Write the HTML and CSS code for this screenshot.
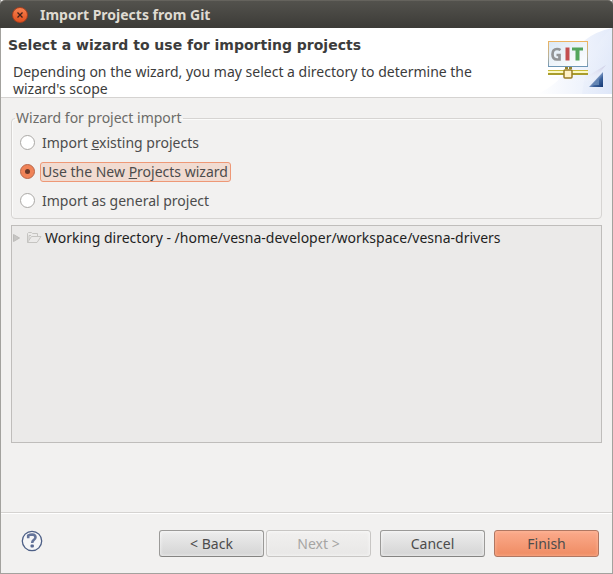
FILE: index.html
```html
<!DOCTYPE html>
<html lang="en">
<head>
<meta charset="utf-8">
<title>Import Projects from Git</title>
<link rel="stylesheet" href="styles.css">
</head>
<body>
<div class="window">
  <header class="titlebar">
    <button class="close" type="button" aria-label="Close">
      <svg width="8" height="8" viewBox="0 0 8 8"><path d="M1.5 1.5l5 5M6.5 1.5l-5 5" stroke="#40211a" stroke-width="1.3"/></svg>
    </button>
    <span class="caption">Import Projects from Git</span>
  </header>
  <section class="banner">
    <div class="intro">
      <h1>Select a wizard to use for importing projects</h1>
      <p>Depending on the wizard, you may select a directory to determine the wizard's scope</p>
    </div>
    <svg class="art" width="75" height="66" viewBox="0 0 75 66" aria-hidden="true">
      <defs>
        <linearGradient id="sky" x1="0" y1="0" x2="1" y2="1"><stop offset="0" stop-color="#f4f7fd"/><stop offset="1" stop-color="#dce5f8"/></linearGradient>
        <linearGradient id="fade" x1="0" y1="0" x2="1" y2="0"><stop offset="0" stop-color="#fff"/><stop offset="1" stop-color="#e4ebfa"/></linearGradient>
        <linearGradient id="frame" x1="0" y1="0" x2="0" y2="1"><stop offset="0" stop-color="#efb45e"/><stop offset=".6" stop-color="#b8b19a"/><stop offset="1" stop-color="#7199b8"/></linearGradient>
        <linearGradient id="screen" x1="0" y1="0" x2="1" y2="1"><stop offset="0" stop-color="#dce9f5"/><stop offset="1" stop-color="#fff"/></linearGradient>
        <linearGradient id="corner" x1="0" y1="0" x2="1" y2="1"><stop offset=".35" stop-color="#b9cbe5"/><stop offset=".65" stop-color="#3d639d"/><stop offset="1" stop-color="#143873"/></linearGradient>
        <linearGradient id="shade" x1="0" y1="0" x2="0" y2="1"><stop offset="0" stop-color="#c4c2df"/><stop offset="1" stop-color="#fff" stop-opacity="0"/></linearGradient>
      </defs>
      <path d="M0 66Q25 55 32 35Q42 7 75 0V66Z" fill="url(#fade)"/>
      <path d="M45 66Q50 22 75 0V66Z" fill="url(#sky)" opacity=".7"/>
      <path d="M10 49H49L69 37L56 53Q25 57 10 49Z" fill="url(#shade)" opacity=".8"/>
      <path d="M11 13H51V39H11Z" fill="url(#frame)"/>
      <path d="M12 14H50V38H12Z" fill="url(#screen)"/>
      <path d="M11 38H51V39H11Z" fill="#6d96b6"/>
      <g fill="none">
        <path d="M23.500 22Q22 21 20 21Q15.500 21 15.500 26.300Q15.500 31.500 20 31.500H22.500V27H19.500" stroke="#929496" stroke-width="2.700"/>
        <path d="M30.500 19.500V32.500" stroke="#c34e50" stroke-width="4"/>
        <path d="M35 21H46" stroke="#52a55c" stroke-width="3"/>
        <path d="M40.500 21V32.500" stroke="#52a55c" stroke-width="4"/>
      </g>
      <path d="M11 42H51V47H11Z" fill="#fbf8c4"/>
      <path d="M11 42.500H51" stroke="#c9bb36"/>
      <path d="M11 46H51" stroke="#a99c2b" stroke-width="2"/>
      <path d="M28 40H35" stroke="#938230" stroke-width="2" stroke-dasharray="3 1"/>
      <rect x="27" y="42" width="8" height="8" rx="1" fill="#fff2c7" stroke="#997c23" stroke-width="1.500"/>
      <path d="M52 59L66 44V59Z" fill="url(#corner)"/>
      <path d="M56 57L62 51V57Z" fill="#7394be" opacity=".7"/>
    </svg>
  </section>
  <main class="content">
    <fieldset class="group">
      <legend>Wizard for project import</legend>
      <label class="option"><input type="radio" name="wizard"><span>Import <u>e</u>xisting projects</span></label>
      <label class="option"><input type="radio" name="wizard" checked><span>Use the New <u>P</u>rojects wizard</span></label>
      <label class="option"><input type="radio" name="wizard"><span>Import as general project</span></label>
    </fieldset>
    <div class="tree" role="tree">
      <div class="node" role="treeitem" aria-expanded="false">
        <svg width="7" height="8" viewBox="0 0 7 8"><path d="M.5.5L6.500 4L.5 7.500Z" fill="#c6c5c3" stroke="#bcbbb9"/></svg>
        <svg class="folder" width="16" height="12" viewBox="0 0 16 12"><path d="M1.500 10.500V1.500L2.500.5H5.500L6.500 1.500H11.500V4.500M1.500 10.500L5.500 4.500H15L11 10.500ZM3 8V3.500H5" fill="none" stroke="#c5c4c1"/></svg>
        <span>Working directory - /home/vesna-developer/workspace/vesna-drivers</span>
      </div>
    </div>
  </main>
  <footer class="actions">
    <button class="help" type="button" aria-label="Help">
      <svg width="22" height="22" viewBox="0 0 22 22"><circle cx="11" cy="11" r="9.700" fill="#f6f6f7" stroke="#4d5f86" stroke-width="1.300"/><path d="M7.200 8.300V5.700Q9 4.500 11.300 4.500Q14.500 4.700 14.500 7.300Q14.500 9 12.600 10.100Q11.200 11 11.200 13" fill="none" stroke="#65749a" stroke-width="2.600"/><rect x="9.500" y="14.500" width="3.400" height="3" rx="1" fill="#5a6a92"/></svg>
    </button>
    <button class="btn" type="button">&lt; Back</button>
    <button class="btn" type="button" disabled>Next &gt;</button>
    <button class="btn apart" type="button">Cancel</button>
    <button class="btn apart primary" type="button">Finish</button>
  </footer>
</div>
</body>
</html>
```

FILE: styles.css
```css
* { box-sizing: border-box; }

body {
  margin: 0;
  background: #3c3b37;
  color: #4c4c4c;
  font: 14px/18px "Noto Sans", "Open Sans", sans-serif;
}

button { font: inherit; color: inherit; padding: 0; }

.window {
  display: flex;
  flex-direction: column;
  min-height: 100vh;
  background: #f2f1f0;
  border: 1px solid #a3a29e;
  border-top: 0;
}

.titlebar {
  display: flex;
  align-items: center;
  gap: 12px;
  height: 28px;
  margin: 0 -1px;
  padding: 0 12px;
  background: linear-gradient(#53524d, #3c3b37);
  border-top: 1px solid #65635d;
  border-radius: 5px 5px 0 0;
  color: #dfdbd2;
  font-weight: bold;
}

.close {
  display: grid;
  place-items: center;
  width: 16px;
  height: 16px;
  border: 1px solid #a9401f;
  border-radius: 50%;
  background: linear-gradient(#f8814f, #e1501f);
}

.banner {
  display: flex;
  justify-content: space-between;
  background: #fff;
  border-bottom: 1px solid #d5d3d1;
}

.intro { max-width: 500px; padding: 8px 0 0 7px; }
.art { flex: none; }

h1 {
  margin: 0;
  font: bold 14px/18px "DejaVu Sans", sans-serif;
  color: #3c3c3c;
}

p { margin: 9px 0 0 5px; line-height: 17px; color: #3c3c3c; }

.content {
  flex: 1;
  display: flex;
  flex-direction: column;
  gap: 6px;
  padding: 11px 10px 69px;
}

.group {
  margin: 0;
  padding: 1px 8px 3px;
  border: 1px solid #d6d4d2;
  border-radius: 4px;
  box-shadow: inset 1px 1px #fbfbfa;
}

legend { margin-left: -5px; padding: 0 1px; color: #6c6b68; line-height: 18px; }

.option {
  display: flex;
  align-items: center;
  gap: 5px;
  height: 29px;
}

.option input {
  appearance: none;
  display: grid;
  place-items: center;
  width: 15px;
  height: 15px;
  margin: 0;
  border: 1px solid #aaa8a5;
  border-radius: 50%;
  background: #fff;
  outline: 0;
}

.option input:checked { border-color: #b9674a; background: #f08358; }
.option input:checked::before { content: ""; width: 5px; height: 5px; border-radius: 50%; background: #66382a; }

.option span { padding: 0 2px 0 1px; border: 1px solid transparent; border-radius: 3px; }
.option input:checked + span { background: #f1dbd1; border-color: #ee9876; }

.tree {
  flex: 1;
  padding: 3px 1px;
  background: #ebeae9;
  border: 1px solid #bfbdbb;
  color: #1f1f1f;
}

.node { display: flex; align-items: center; height: 18px; }
.folder { margin: 0 3px 0 6px; }

.actions {
  display: flex;
  align-items: center;
  padding: 17px 13px 16px 20px;
  border-top: 1px solid #d5d3d1;
  box-shadow: inset 0 1px #fff;
}

.help {
  display: grid;
  align-self: flex-start;
  margin-right: auto;
  border: 0;
  background: none;
}

.btn {
  width: 105px;
  height: 27px;
  margin-left: 2px;
  border: 1px solid #9b9a98;
  border-bottom-color: #858482;
  border-radius: 3px;
  background: linear-gradient(#ededed, #d4d4d4);
  box-shadow: inset 0 0 3px 1px #ffffff80;
}

.btn.apart { margin-left: 9px; }
.btn:disabled { color: #a6a5a3; border-color: #c8c6c4; background: linear-gradient(#f1f0ef, #e8e7e6); }

.primary { border-color: #b07762; background: linear-gradient(#fbab8c, #ef8b62); box-shadow: inset 0 0 3px 1px #ffc0a580; }
```
